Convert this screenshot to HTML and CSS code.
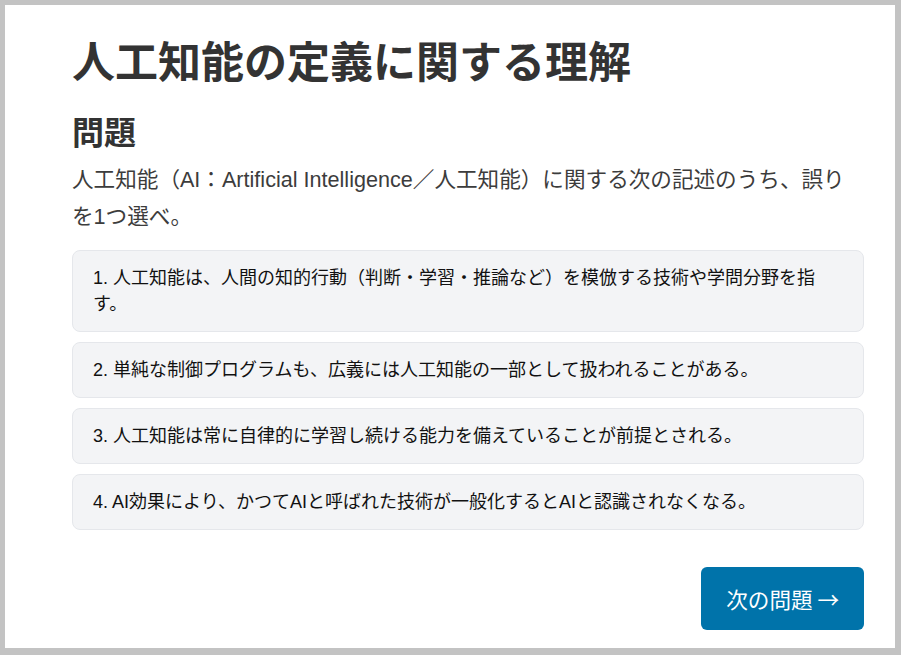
FILE: index.html
```html
<!DOCTYPE html>
<html lang="ja">

<head>
    <meta charset="UTF-8">
    <meta name="viewport" content="width=device-width, initial-scale=1.0">
    <title>人工知能の定義に関する理解</title>
    <link rel="stylesheet" href="styles.css">
</head>

<body>
    <div class="quiz__page">
        <h1 class="quiz__title">人工知能の定義に関する理解</h1>
        <h2 class="quiz__heading">問題</h2>
        <p class="quiz__question">人工知能（AI：Artificial Intelligence／人工知能）に関する次の記述のうち、誤りを1つ選べ。</p>
        <ul class="quiz__options">
            <li class="option">1. 人工知能は、人間の知的行動（判断・学習・推論など）を模倣する技術や学問分野を指す。</li>
            <li class="option">2. 単純な制御プログラムも、広義には人工知能の一部として扱われることがある。</li>
            <li class="option">3. 人工知能は常に自律的に学習し続ける能力を備えていることが前提とされる。</li>
            <li class="option">4. AI効果により、かつてAIと呼ばれた技術が一般化するとAIと認識されなくなる。</li>
        </ul>
        <div class="quiz__actions">
            <button class="next">次の問題 →</button>
        </div>
    </div>
</body>

</html>
```

FILE: styles.css
```css
* {
    margin: 0;
    padding: 0;
    box-sizing: border-box;
}

html {
    background: #c3c3c3;
}

body {
    font-family: "Liberation Sans", "Noto Sans CJK JP", sans-serif;
    font-size: 18px;
    color: #222;
}

.quiz__page {
    margin: 5px 6px 0 5px;
    height: 643px;
    background: #fff;
    padding: 33px 31px 0 67px;
}

.quiz__title {
    font-size: 43px;
    line-height: 1.2;
    color: #333;
    font-weight: bold;
}

.quiz__heading {
    margin-top: 24px;
    font-size: 32px;
    line-height: 1.2;
    color: #333;
    font-weight: bold;
}

.quiz__question {
    margin-top: 10px;
    font-size: 21.6px;
    line-height: 1.7;
    color: #3c3c3c;
}

.quiz__options {
    list-style: none;
    margin-top: 15px;
    display: flex;
    flex-direction: column;
    gap: 10px;
}

.option {
    background: #f3f4f6;
    border: 1px solid #e5e7eb;
    border-radius: 8px;
    padding: 14px 20px;
    line-height: 26px;
    color: #111;
}

.quiz__actions {
    display: flex;
    justify-content: flex-end;
    margin-top: 37px;
}

.next {
    border: none;
    height: 63px;
    padding: 0 25px;
    border-radius: 6px;
    background: #0073aa;
    color: #fff;
    font-family: "Noto Sans CJK JP", "Liberation Sans", sans-serif;
    font-size: 21.6px;
    cursor: pointer;
}
```
